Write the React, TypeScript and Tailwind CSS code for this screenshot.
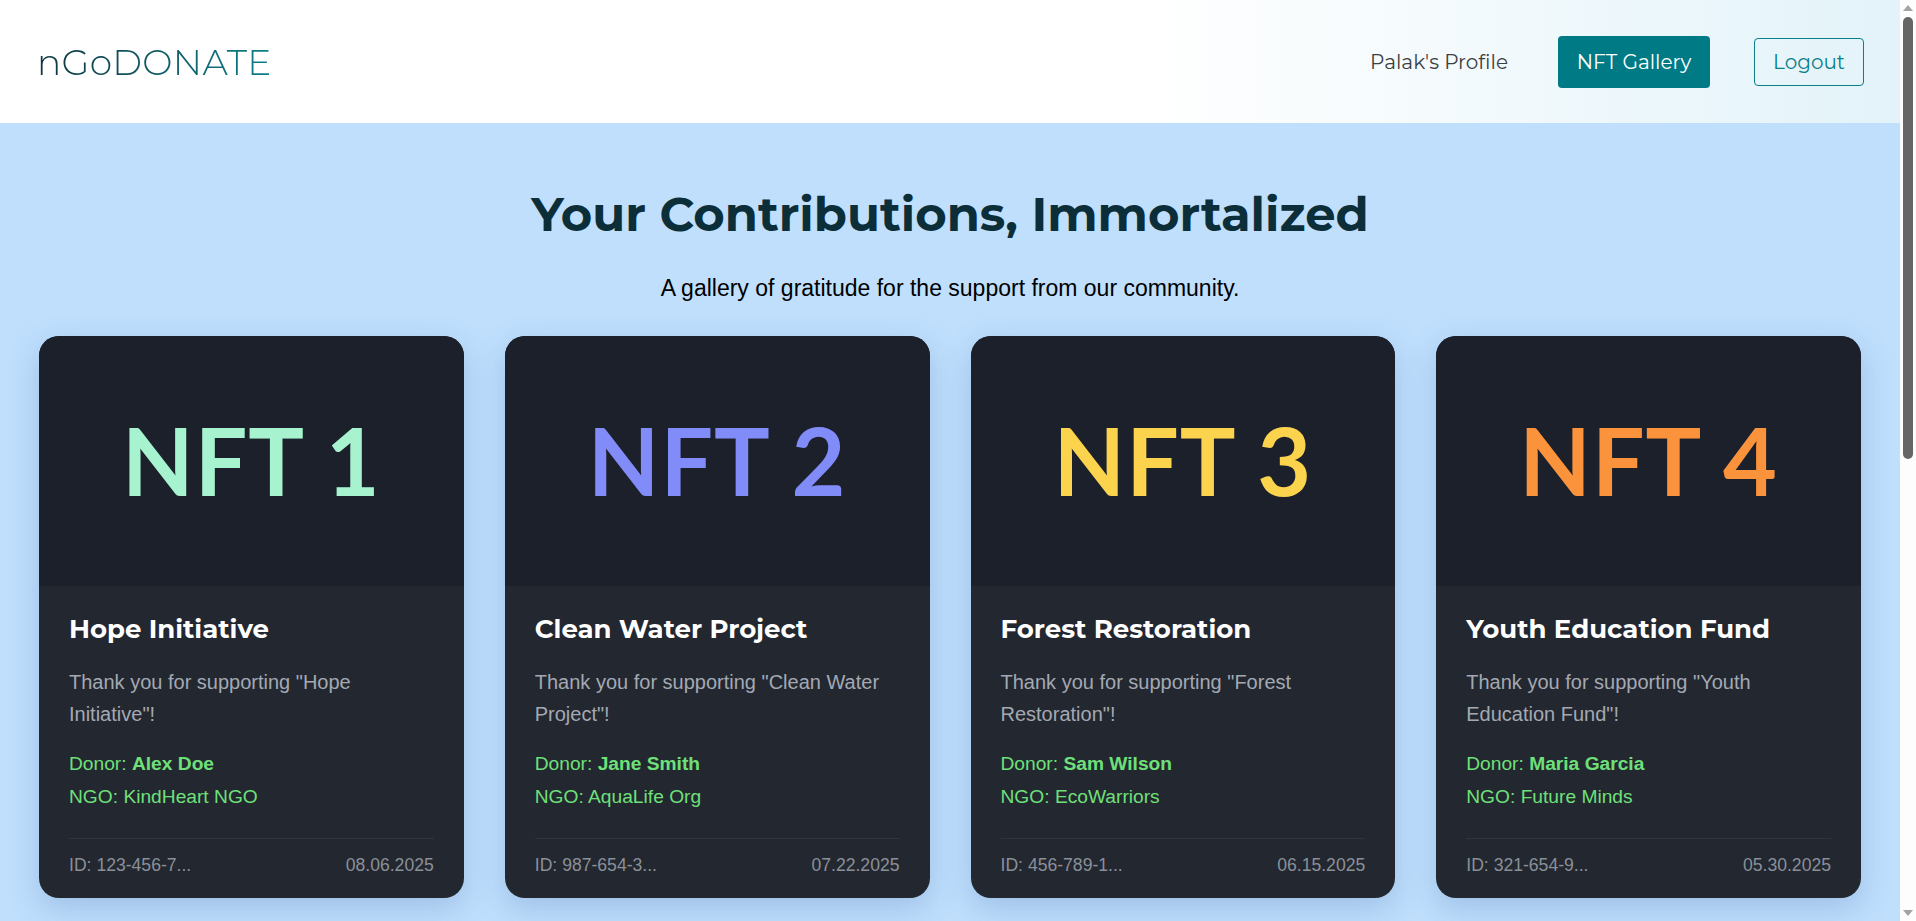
import React from "react";

interface Nft {
  label: string;
  color: string;
  title: string;
  donor: string;
  ngo: string;
  id: string;
  date: string;
}

const nfts: Nft[] = [
  {
    label: "NFT 1",
    color: "text-[#a7f3d0]",
    title: "Hope Initiative",
    donor: "Alex Doe",
    ngo: "KindHeart NGO",
    id: "123-456-7...",
    date: "08.06.2025",
  },
  {
    label: "NFT 2",
    color: "text-[#818cf8]",
    title: "Clean Water Project",
    donor: "Jane Smith",
    ngo: "AquaLife Org",
    id: "987-654-3...",
    date: "07.22.2025",
  },
  {
    label: "NFT 3",
    color: "text-[#fcd34d]",
    title: "Forest Restoration",
    donor: "Sam Wilson",
    ngo: "EcoWarriors",
    id: "456-789-1...",
    date: "06.15.2025",
  },
  {
    label: "NFT 4",
    color: "text-[#fb923c]",
    title: "Youth Education Fund",
    donor: "Maria Garcia",
    ngo: "Future Minds",
    id: "321-654-9...",
    date: "05.30.2025",
  },
];

const heading = "font-['Montserrat','Inter',sans-serif]";
const body = "font-['Liberation_Sans',Arial,sans-serif]";

function NftCard({ nft }: { nft: Nft }) {
  return (
    <div className="flex flex-col overflow-hidden rounded-[20px] bg-[#23272f] shadow-[0_10px_30px_rgba(60,100,160,0.25)]">
      <div className="flex h-[250px] items-center justify-center bg-[#1b202b]">
        <span
          className={`font-['Lato',sans-serif] text-[93px] font-bold leading-none tracking-[1px] ${nft.color}`}
        >
          {nft.label}
        </span>
      </div>
      <div className="flex flex-col px-[30px] pt-[28px] pb-[20px]">
        <h3 className={`${heading} text-[26px] font-bold leading-[1.2] text-white`}>
          {nft.title}
        </h3>
        <p className={`${body} mt-[21px] text-[20px] leading-[32px] text-[#a3a9b4]`}>
          Thank you for supporting "{nft.title}"!
        </p>
        <div className={`${body} mt-[17px] flex flex-col text-[19.2px] leading-[33px] text-[#6ee07a]`}>
          <span>
            Donor: <b>{nft.donor}</b>
          </span>
          <span>NGO: {nft.ngo}</span>
        </div>
        <div
          className={`${body} mt-[25px] flex items-center justify-between border-t border-[#30343d] pt-[13px] text-[17.6px] text-[#8a909a]`}
        >
          <span>ID: {nft.id}</span>
          <span>{nft.date}</span>
        </div>
      </div>
    </div>
  );
}

function Scrollbar() {
  return (
    <div className="sticky top-0 flex h-[921px] w-[16px] shrink-0 flex-col items-center bg-[#fdfdfd]">
      <div className="mt-[5px] h-0 w-0 border-x-[5px] border-b-[6px] border-x-transparent border-b-[#a3a3a3]" />
      <div className="mt-[6px] h-[442px] w-[10px] rounded-full bg-[#666666]" />
      <div className="flex-1" />
      <div className="mb-[5px] h-0 w-0 border-x-[5px] border-t-[6px] border-x-transparent border-t-[#a3a3a3]" />
    </div>
  );
}

export default function App() {
  return (
    <div className="flex items-start">
      <div className="min-h-[1830px] flex-1 bg-[#bfdffd]">
        <header className="flex h-[123px] items-center justify-between bg-gradient-to-r from-white from-60% to-[#e3f3f9] pl-[37px] pr-[36px]">
          <div
            className={`${heading} bg-gradient-to-r from-[#0d3640] to-[#0a7f8a] bg-clip-text text-[36px] font-light tracking-[0.3px] text-transparent`}
          >
            nGoDONATE
          </div>
          <nav className={`${heading} flex items-center text-[20px]`}>
            <a className="mr-[50px] text-[#3a3f44]">Palak's Profile</a>
            <button className="mr-[44px] h-[52px] w-[152px] rounded-[4px] bg-[#007b86] text-white">
              NFT Gallery
            </button>
            <button className="h-[48px] w-[110px] rounded-[4px] border border-[#0a7f8a] text-[#0a7f8a]">
              Logout
            </button>
          </nav>
        </header>

        <main className="px-[39px] pt-[67px]">
          <h1 className={`${heading} text-center text-[48px] font-bold leading-none text-[#0c2e38]`}>
            Your Contributions, Immortalized
          </h1>
          <p className={`${body} mt-[33px] text-center text-[23px] text-black`}>
            A gallery of gratitude for the support from our community.
          </p>
          <div className="mt-[30px] grid grid-cols-4 gap-[41px]">
            {nfts.map((n) => (
              <NftCard key={n.label} nft={n} />
            ))}
          </div>
        </main>
      </div>
      <Scrollbar />
    </div>
  );
}
